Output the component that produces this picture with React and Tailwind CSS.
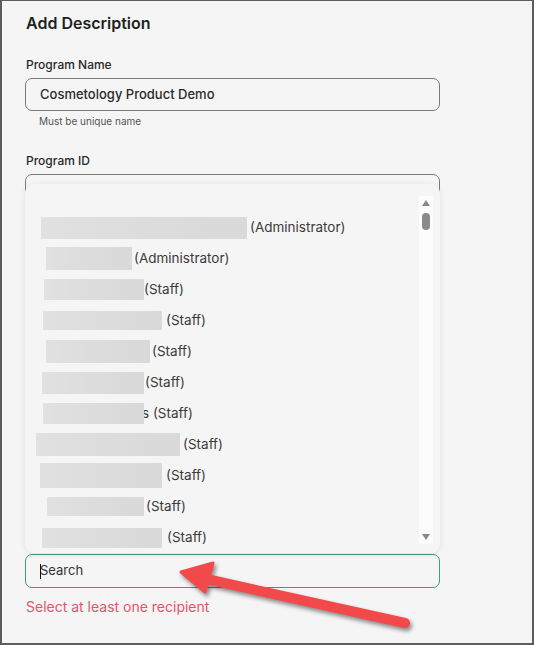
import React from "react";

const recipients = [
  { left: 16, width: 206, height: 22, role: "(Administrator)", gap: 3 },
  { left: 21, width: 86, height: 23, role: "(Administrator)", gap: 2 },
  { left: 19, width: 100, height: 21, role: "(Staff)", gap: 0 },
  { left: 18, width: 119, height: 19, role: "(Staff)", gap: 4 },
  { left: 21, width: 104, height: 23, role: "(Staff)", gap: 2 },
  { left: 17, width: 102, height: 22, role: "(Staff)", gap: 1 },
  { left: 18, width: 101, height: 21, role: "s (Staff)", gap: -2 },
  { left: 11, width: 144, height: 23, role: "(Staff)", gap: 3 },
  { left: 15, width: 122, height: 25, role: "(Staff)", gap: 4 },
  { left: 22, width: 97, height: 19, role: "(Staff)", gap: 2 },
  { left: 17, width: 120, height: 20, role: "(Staff)", gap: 5 },
];

function RecipientRow({ r }) {
  return (
    <div className="flex h-[31px] items-center">
      <div
        className="relative z-10 shrink-0 rounded-[1px] bg-gradient-to-r from-[#e1e1e1] via-[#dcdcdc] to-[#d9d9d9] blur-[0.4px]"
        style={{ marginLeft: r.left, width: r.width, height: r.height, marginRight: r.gap }}
      />
      <span className="whitespace-nowrap text-[13.5px] leading-none text-[#3b3b3b]">{r.role}</span>
    </div>
  );
}

function Scrollbar() {
  return (
    <div className="mt-[12px] mb-[9px] mr-[7px] flex w-[14px] shrink-0 flex-col items-center self-stretch bg-[#fcfcfc] pt-[4px] pb-[4px]">
      <div className="h-0 w-0 border-x-[4px] border-b-[6px] border-x-transparent border-b-[#8a8a8a]" />
      <div className="mt-[7px] h-[17px] w-[8px] rounded-full bg-[#8a8a8a]" />
      <div className="flex-1" />
      <div className="h-0 w-0 border-x-[4px] border-t-[6px] border-x-transparent border-t-[#8a8a8a]" />
    </div>
  );
}

export default function App() {
  return (
    <div
      className="relative h-[645px] w-[534px] overflow-hidden border-t border-l-2 border-r-2 border-b-2 border-[#5c5c5c] bg-[#f5f5f5] text-[#222]"
      style={{ fontFamily: "Inter, 'Noto Sans', sans-serif" }}
    >
      <div className="w-[438px] pl-[23px] pt-[10px]">
        <h2 className="pl-px text-[16px] font-semibold leading-6 text-[#1f1f1f]">Add Description</h2>

        <label className="mt-[22px] block pl-px text-[12px] font-medium leading-4 text-[#2a2a2a]">Program Name</label>
        <div className="mt-[5px] flex h-[33px] items-center rounded-[7px] border border-[#7a7a7a] pl-[14px] text-[13px] font-medium text-[#2a2a2a]">
          Cosmetology Product Demo
        </div>
        <p className="mt-[3px] pl-[14px] text-[10px] leading-[14px] text-[#555]">Must be unique name</p>

        <label className="mt-[25px] block pl-px text-[12px] font-medium leading-4 text-[#2a2a2a]">Program ID</label>
        <div className="mt-[5px] h-[33px] rounded-[7px] border border-[#7a7a7a]" />

        <div className="relative mt-[347px]">
          {/* recipient dropdown, opened above the search field */}
          <div className="absolute bottom-full left-0 right-0 mb-px flex h-[369px] rounded-[9px] bg-[#f5f5f5] shadow-[0_1px_6px_rgba(0,0,0,0.09)]">
            <div className="h-full flex-1 overflow-hidden pt-[28px]">
              {recipients.map((r, i) => (
                <RecipientRow key={i} r={r} />
              ))}
            </div>
            <Scrollbar />
          </div>

          <div className="flex h-[34px] items-center rounded-[7px] border border-[#3f9a86] pl-[14px] text-[13px] text-[#333]">
            <span className="-mr-px h-[15px] w-px bg-[#111]" />
            <span>Search</span>
          </div>
        </div>

        <p className="mt-[9px] pl-px text-[14px] leading-5 text-[#e2566c]">Select at least one recipient</p>
      </div>

      {/* callout arrow pointing at the search field */}
      <svg
        className="pointer-events-none absolute left-0 top-0 drop-shadow-[2px_3px_2px_rgba(0,0,0,0.45)]"
        width="534"
        height="645"
        viewBox="0 0 534 645"
      >
        <line x1="200" y1="577" x2="403" y2="622" stroke="#f24a4a" strokeWidth="10" strokeLinecap="round" />
        <polygon points="179,571 211,562 203,591" fill="#f24a4a" stroke="#f24a4a" strokeWidth="3" strokeLinejoin="round" />
      </svg>
    </div>
  );
}
